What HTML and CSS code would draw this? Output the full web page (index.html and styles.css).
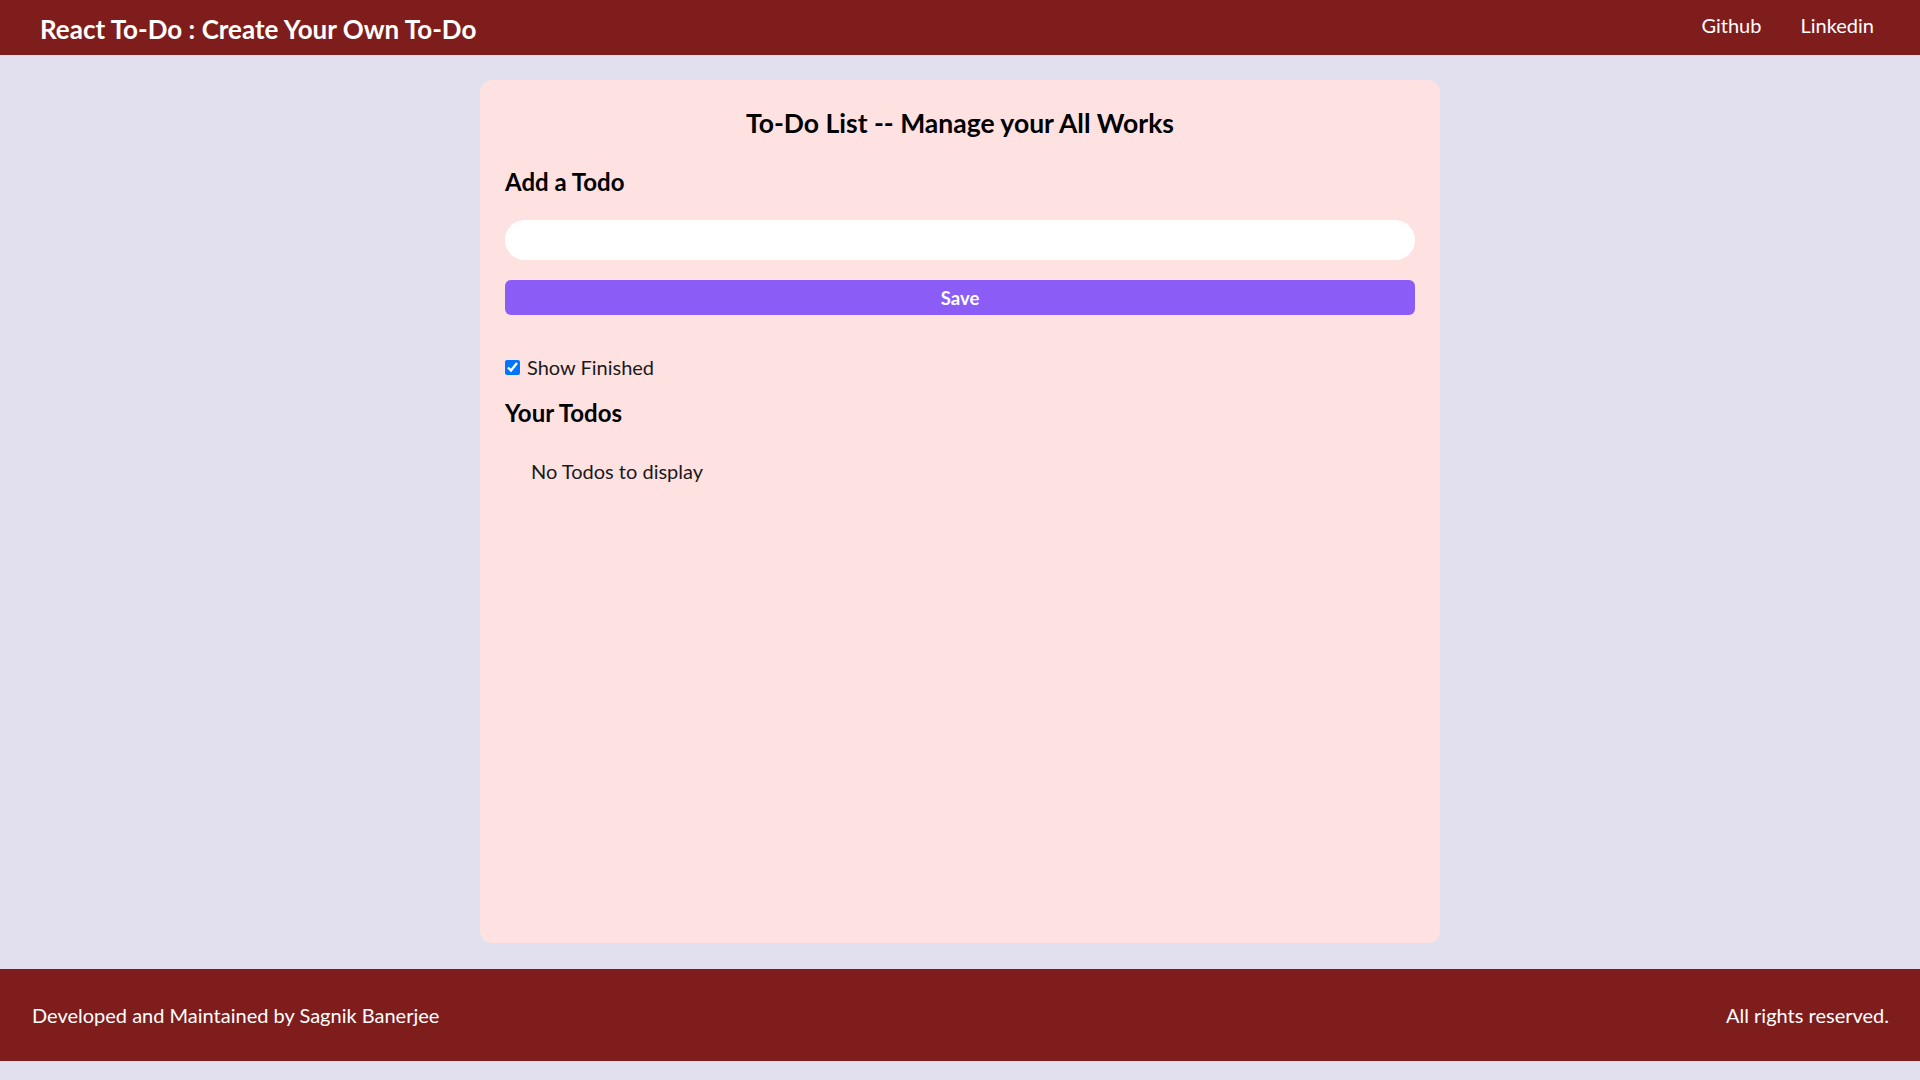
FILE: index.html
```html
<!DOCTYPE html>
<html lang="en">
<head>
<meta charset="utf-8">
<title>React To-Do</title>
<link rel="stylesheet" href="styles.css">
</head>
<body>
<header class="topbar">
  <div class="brand">React To-Do : Create Your Own To-Do</div>
  <nav class="nav">
    <a class="nav-link" href="#">Github</a>
    <a class="nav-link" href="#">Linkedin</a>
  </nav>
</header>
<main class="main">
  <section class="card">
    <h1 class="card-title">To-Do List -- Manage your All Works</h1>
    <h2 class="section-title add-title">Add a Todo</h2>
    <div class="add-form">
      <input class="todo-input" type="text">
      <button class="save-btn">Save</button>
    </div>
    <label class="show-finished">
      <input type="checkbox" class="check" checked>
      <span>Show Finished</span>
    </label>
    <h2 class="section-title todos-title">Your Todos</h2>
    <div class="todos">
      <div class="empty">No Todos to display</div>
    </div>
  </section>
</main>
<footer class="footer">
  <div class="footer-left">Developed and Maintained by Sagnik Banerjee</div>
  <div class="footer-right">All rights reserved.</div>
</footer>
</body>
</html>
```
FILE: styles.css
```css
* { box-sizing: border-box; }
html { background: #e2e0ef; }
body {
  margin: 0;
  background: #e2e0ef;
  font-family: "Lato", "Open Sans", sans-serif;
  color: #111;
}
.topbar {
  height: 55px;
  background: #7f1d1d;
  color: #fff;
  display: flex;
  align-items: center;
  justify-content: space-between;
  padding: 0 46px 0 40px;
}
.brand {
  font-size: 26px;
  font-weight: 700;
  line-height: 31px;
  margin-top: 3px;
}
.nav {
  display: flex;
  gap: 39px;
  margin-top: -6px;
}
.nav-link {
  color: #fff;
  text-decoration: none;
  font-size: 20px;
  line-height: 24px;
}
.main {
  padding: 25px 0 26px;
}
.card {
  width: 960px;
  height: 863px;
  margin: 0 auto;
  background: #fee2e2;
  border-radius: 12px;
  padding: 25px 25px;
}
.card-title {
  margin: 0;
  text-align: center;
  font-size: 26.5px;
  font-weight: 700;
  line-height: 36px;
  color: #000;
}
.section-title {
  margin: 0;
  font-size: 24px;
  font-weight: 700;
  line-height: 30px;
  color: #000;
}
.add-title {
  margin-top: 26px;
}
.add-form {
  display: flex;
  flex-direction: column;
  gap: 20px;
  margin-top: 23px;
}
.todo-input {
  height: 40px;
  border: none;
  border-radius: 20px;
  background: #fff;
  padding: 0 16px;
  font: inherit;
  outline: none;
}
.save-btn {
  height: 35px;
  border: none;
  border-radius: 6px;
  background: #8b5cf6;
  color: #fff;
  font-family: inherit;
  font-size: 18.5px;
  font-weight: 700;
  padding: 0;
}
.show-finished {
  display: flex;
  align-items: center;
  gap: 7px;
  margin-top: 40px;
  font-size: 20px;
  line-height: 24px;
  color: #1a1a1a;
}
.check {
  margin: 0;
  width: 15px;
  height: 15px;
}
.todos-title {
  margin-top: 19px;
}
.todos {
  padding: 0 26px;
  margin-top: 31px;
}
.empty {
  font-size: 20px;
  line-height: 24px;
  color: #1a1a1a;
}
.footer {
  height: 92px;
  background: #7f1d1d;
  color: #fff;
  display: flex;
  align-items: center;
  justify-content: space-between;
  padding: 0 31px 0 32px;
  font-size: 20px;
  line-height: 24px;
}
```
